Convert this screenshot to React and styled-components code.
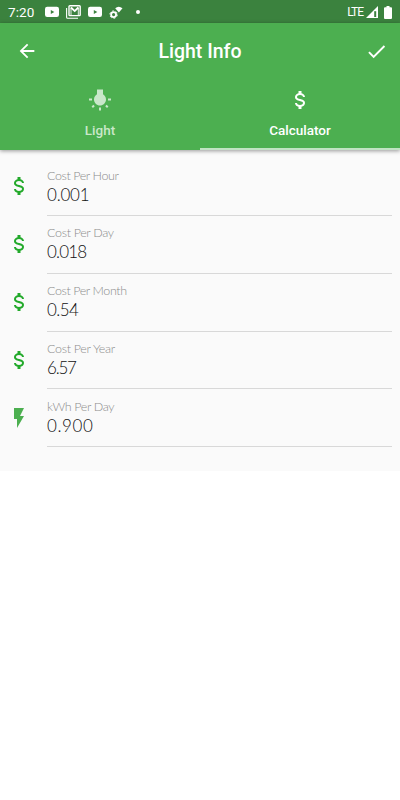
import React from "react";
import styled, { createGlobalStyle } from "styled-components";

//ICON PATHS
const icons = {
  dollar:
    "M7 15h2c0 1.08 1.37 2 3 2s3-.92 3-2c0-1.1-1.04-1.5-3.24-2.03C9.64 12.44 7 11.78 7 9c0-1.79 1.47-3.31 3.5-3.82V3h3v2.18C15.53 5.69 17 7.21 17 9h-2c0-1.08-1.37-2-3-2s-3 .92-3 2c0 1.1 1.04 1.5 3.24 2.03C14.36 11.56 17 12.22 17 15c0 1.79-1.47 3.31-3.5 3.82V21h-3v-2.18C8.47 18.31 7 16.79 7 15z",
  flash: "M7 2v11h3v9l7-12h-4l4-8z",
  bulb: "M3.55 18.54l1.41 1.41 1.8-1.79-1.41-1.41-1.8 1.79zM11 22.45h2V19.5h-2v2.95zM4 10.5H1v2h3v-2zm11-4.19V1.5H9v4.81C7.21 7.35 6 9.28 6 11.5c0 3.31 2.69 6 6 6s6-2.69 6-6c0-2.22-1.21-4.15-3-5.19zm5 4.19v2h3v-2h-3zm-2.76 7.66l1.79 1.8 1.41-1.41-1.8-1.79-1.4 1.4z",
  back: "M20 11H7.83l5.59-5.59L12 4l-8 8 8 8 1.41-1.41L7.83 13H20v-2z",
  check: "M9 16.17L4.83 12l-1.42 1.41L9 19 21 7l-1.41-1.41z",
};

const rows = [
  { label: "Cost Per Hour", value: "0.001", icon: "dollar", labelGap: -0.4, valueGap: -0.2 },
  { label: "Cost Per Day", value: "0.018", icon: "dollar", labelGap: -0.33, valueGap: -0.8 },
  { label: "Cost Per Month", value: "0.54", icon: "dollar", labelGap: -0.4, valueGap: -0.6 },
  { label: "Cost Per Year", value: "6.57", icon: "dollar", labelGap: -0.3, valueGap: -1.2 },
  { label: "kWh Per Day", value: "0.900", icon: "flash", labelGap: -0.35, valueGap: 0.6 },
];

function Icon({ name, size = 24 }) {
  return (
    <svg width={size} height={size} viewBox="0 0 24 24" fill="currentColor">
      <path d={icons[name]} />
    </svg>
  );
}

function VideoIcon() {
  return (
    <svg width="14" height="12" viewBox="0 0 14 12">
      <rect y="0.7" width="14" height="10.3" rx="2.2" fill="#fff" />
      <path d="M5.8 3.9v4l3.5-2z" fill="#3b823e" />
    </svg>
  );
}

function MailIcon() {
  return (
    <svg width="15" height="14" viewBox="0 0 15 14" fill="none" stroke="#fff">
      <path d="M0.6 3v9.2q0 1.1 1.1 1.1H12" strokeWidth="1.1" />
      <rect x="3" y="0.8" width="11.2" height="9.8" rx="0.8" strokeWidth="1.4" />
      <path d="M5 2.5l3.7 3.6L12.3 2.5" strokeWidth="1.8" />
      <path d="M5 2.5V10M12.3 2.5V10" strokeWidth="0.9" />
    </svg>
  );
}

function GearIcon() {
  return (
    <svg width="14" height="13" viewBox="0 0 14 13" fill="none" stroke="#fff">
      <circle cx="4.6" cy="8.6" r="2.5" strokeWidth="1.8" />
      <circle cx="4.6" cy="8.6" r="3.7" strokeWidth="1" strokeDasharray="1.9 1.97" />
      <path d="M6.2 2.2Q9.7-.9 13.5 2.2L9.9 6.6z" fill="#fff" stroke="none" />
    </svg>
  );
}

export default function App() {
  return (
    <Page>
      <GlobalStyle />
      <StatusBar>
        <Time>7:20</Time>
        <Notifications>
          <VideoIcon />
          <MailIcon />
          <VideoIcon />
          <GearIcon />
          <Dot />
        </Notifications>
        <Network>LTE</Network>
        <svg width="12" height="12" viewBox="0 0 12 12">
          <path d="M0 12L12 0v12z" fill="#fff" />
          <path d="M8.2 5.2h2V11h-2z" fill="#3b823e" />
        </svg>
        <Battery width="8" height="13" viewBox="0 0 8 13">
          <path d="M2.5 0h3v1.2H7q1 0 1 1V12q0 1-1 1H1q-1 0-1-1V2.2q0-1 1-1h1.5z" fill="#fff" />
        </Battery>
      </StatusBar>

      <Header>
        <Toolbar>
          <Action aria-label="Back"><Icon name="back" size={22} /></Action>
          <Title>Light Info</Title>
          <Action aria-label="Save"><Icon name="check" size={23} /></Action>
        </Toolbar>
        <Tabs>
          <Tab>
            <Icon name="bulb" />
            <TabLabel>Light</TabLabel>
          </Tab>
          <Tab $active>
            <Icon name="dollar" />
            <TabLabel>Calculator</TabLabel>
          </Tab>
        </Tabs>
      </Header>

      <List>
        {rows.map((row) => (
          <ListRow key={row.label}>
            <RowIcon $color={row.icon === "flash" ? "#4caf50" : "#22a92a"}>
              <Icon name={row.icon} />
            </RowIcon>
            <Details>
              <Label $gap={row.labelGap}>{row.label}</Label>
              <Value $gap={row.valueGap}>{row.value}</Value>
            </Details>
          </ListRow>
        ))}
      </List>
    </Page>
  );
}

const GlobalStyle = createGlobalStyle`
  * {
    box-sizing: border-box;
  }

  body {
    margin: 0;
    background: #fff;
  }

  svg {
    display: block;
    flex-shrink: 0;
  }
`;

const Page = styled.div`
  width: 400px;
  height: 800px;
  overflow: hidden;
  background: #fff;
  font-family: Roboto, sans-serif;
`;

const StatusBar = styled.div`
  display: flex;
  align-items: center;
  height: 23px;
  padding: 1px 8px 0;
  color: #fff;
  background: #3b823e;
`;

const Time = styled.span`
  width: 37px;
  font-size: 13.5px;
  line-height: 20px;
  letter-spacing: 0.1px;
`;

const Notifications = styled.div`
  display: flex;
  flex: 1;
  align-items: center;
  gap: 7px;
`;

const Dot = styled.span`
  width: 4px;
  height: 4px;
  margin-left: 5.5px;
  border-radius: 50%;
  background: #fff;
`;

const Network = styled.span`
  margin-right: 3px;
  font-size: 12px;
  line-height: 20px;
  letter-spacing: -1px;
`;

const Battery = styled.svg`
  margin-left: 6px;
`;

const Header = styled.header`
  position: relative;
  height: 127px;
  color: #fff;
  background: #4caf50;
  box-shadow: 0 1px 4px rgba(0, 0, 0, 0.4);
`;

const Toolbar = styled.div`
  display: grid;
  grid-template-columns: 40px 1fr 40px;
  align-items: center;
  height: 56px;
  padding: 0 12px 0 16px;
`;

const Action = styled.button`
  padding: 0;
  border: 0;
  color: inherit;
  background: none;

  &:last-child {
    justify-self: end;
  }

  &:first-child {
    justify-self: start;
  }
`;

const Title = styled.h1`
  margin: 0;
  padding: 1px 4px 0 0;
  font-size: 19.5px;
  font-weight: 500;
  line-height: 25px;
  text-align: center;
`;

const Tabs = styled.div`
  display: grid;
  grid-template-columns: 1fr 1fr;
  height: 71px;
`;

const Tab = styled.div`
  display: flex;
  flex-direction: column;
  align-items: center;
  gap: 10px;
  padding-top: 9px;
  color: ${({ $active }) => ($active ? "#fff" : "#c9e7ca")};
  border-bottom: 2px solid ${({ $active }) => ($active ? "#c0e3c2" : "transparent")};
`;

const TabLabel = styled.span`
  font-size: 13.5px;
  font-weight: 500;
  line-height: 16px;
`;

const List = styled.main`
  height: 321px;
  padding: 8px 8px 0 7px;
  background: #fafafa;
`;

const ListRow = styled.div`
  display: grid;
  grid-template-columns: 40px 1fr;
  height: 57.85px;
`;

const RowIcon = styled.div`
  padding-top: 16.4px;
  color: ${({ $color }) => $color};
`;

const Details = styled.div`
  display: flex;
  flex-direction: column;
  padding-top: 8.5px;
  font-family: Lato, sans-serif;
  font-weight: 300;
  border-bottom: 1px solid #d8d8d8;
`;

const Label = styled.span`
  font-size: 12.5px;
  line-height: 17px;
  letter-spacing: ${({ $gap }) => $gap}px;
  color: #8c8c8c;
`;

const Value = styled.span`
  font-size: 17px;
  line-height: 21px;
  letter-spacing: ${({ $gap }) => $gap}px;
  color: #111;
`;
